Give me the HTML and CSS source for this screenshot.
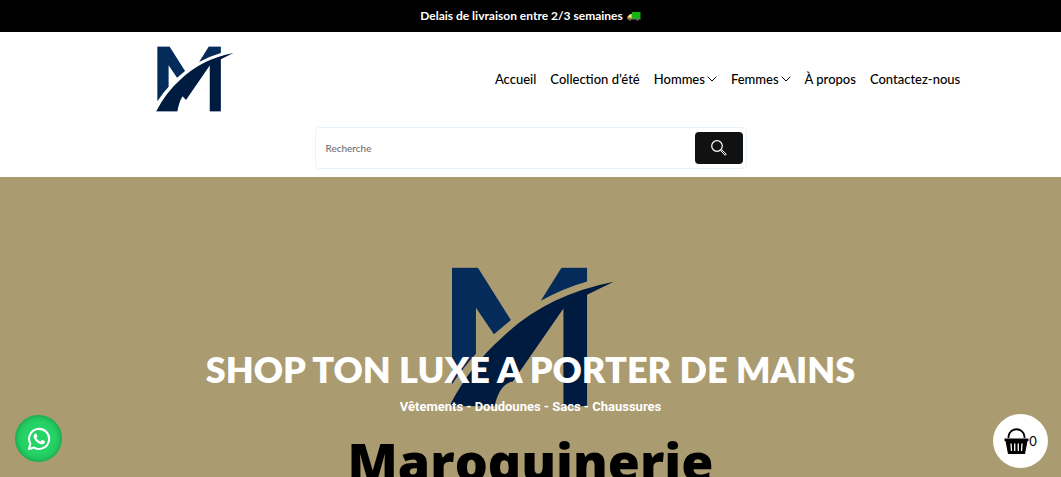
FILE: index.html
```html
<!DOCTYPE html>
<html lang="fr">
<head>
<meta charset="utf-8">
<meta name="viewport" content="width=device-width, initial-scale=1">
<title>Maroquinerie</title>
<link rel="stylesheet" href="styles.css">
</head>
<body>
<svg class="sprite" aria-hidden="true">
  <symbol id="mark" viewBox="50 50 505 420">
    <path class="mark-light" d="M65 52H143L242 209L191 252L137 172V310Q100 350 65 402ZM394 52H471V93Q400 113 332 151Z"/>
    <path class="mark-dark" d="M57 468Q120 345 215 262Q345 135 551 94L471 133V468H400V174L248 394L226 370Q202 410 193 468Z"/>
  </symbol>
  <symbol id="mark-plain" viewBox="50 50 505 420">
    <path class="mark-light" d="M65 52H143L242 209L191 252L137 172V310Q100 350 65 402ZM394 52H471V93Q400 113 332 151Z"/>
    <path class="mark-dark" d="M57 468Q120 345 215 262Q345 135 551 94L471 133V468H400V174L248 394Q208 400 193 468Z"/>
  </symbol>
  <symbol id="chevron" viewBox="0 0 10 6">
    <path d="M.7.7 5 5 9.300.7" fill="none" stroke="currentColor"/>
  </symbol>
</svg>

<div class="announcement">
  <span>Delais de livraison entre 2/3 semaines</span>
  <svg class="truck" viewBox="0 0 14 10" aria-hidden="true">
    <path d="M5 1H13.500V8H5Z" fill="#12b812"/>
    <path d="M5 3H3L.5 5.500V8H5Z" fill="#f5a91c"/>
    <path d="M3 4H4V6H1.500Z" fill="#d9ecf2"/>
    <path d="M.5 8H13.500" stroke="#777"/>
    <circle cx="3" cy="8.500" r="1.300" fill="#666"/><circle cx="10.500" cy="8.500" r="1.300" fill="#666"/>
  </svg>
</div>

<header class="header">
  <div class="header-row">
    <a class="brand" href="#" aria-label="Maroquinerie"><svg viewBox="0 0 505 420"><use href="#mark" width="505" height="420"/></svg></a>
    <nav class="nav">
      <a href="#">Accueil</a>
      <a href="#">Collection d’été</a>
      <a href="#">Hommes <svg class="chevron"><use href="#chevron"/></svg></a>
      <a href="#">Femmes <svg class="chevron"><use href="#chevron"/></svg></a>
      <a href="#">À propos</a>
      <a href="#">Contactez-nous</a>
    </nav>
  </div>
  <form class="search">
    <input type="search" placeholder="Recherche" aria-label="Recherche">
    <button type="button" aria-label="Lancer la recherche">
      <svg viewBox="0 0 16 16" fill="none" stroke="#fff"><circle cx="6" cy="6" r="5.300" stroke-width="1.200"/><path d="m9.800 10.800 1-1 4.500 4.300-1.200 1.200Z"/></svg>
    </button>
  </form>
</header>

<main class="hero">
  <div class="backdrop" aria-hidden="true">
    <svg class="backdrop-mark" viewBox="0 0 505 420"><use href="#mark-plain" width="505" height="420"/></svg>
    <span class="backdrop-name">Maroquinerie</span>
  </div>
  <h1>SHOP TON LUXE A PORTER DE MAINS</h1>
  <p>Vêtements - Doudounes - Sacs - Chaussures</p>
</main>

<a class="whatsapp" href="#" aria-label="WhatsApp">
  <svg viewBox="0 0 24 24">
    <path d="M2 22 3.400 16.800A10 10 0 1 1 7.200 20.600Z" fill="none" stroke="#fff" stroke-width="2.100" stroke-linejoin="round"/>
    <path d="M8 6.700C8.500 6.300 9.100 6.300 9.400 6.900L10.300 9C10.500 9.600 9.700 10.200 9.300 10.700C10.300 12.600 11.700 13.800 13.600 14.600L14.700 13.300C15 13 15.300 13 15.600 13.100L17.600 14.100C18.200 14.400 18.100 15 17.900 15.600C17.300 17 15.500 17.700 14 17.200C10.500 16.200 7.800 13.600 6.700 10.500C6.200 9 6.800 7.500 8 6.700Z" fill="#fff"/>
  </svg>
</a>
<button class="cart" type="button" aria-label="Panier">
  <svg viewBox="0 0 25 26">
    <path d="M4.500 10V8.500C6-1.200 19-1.200 20.500 8.500V10" fill="none" stroke="#000" stroke-width="1.800"/>
    <path d="M.5 10.500H24.500V13H23.500L21 26H4L1.500 13H.5Z"/>
    <path d="M7 15.500 7.500 23M10.700 15.500V23M14.300 15.500V23M18 15.500 17.500 23" stroke="#fff" stroke-width="1.300"/>
  </svg><span>0</span>
</button>
</body>
</html>
```
FILE: styles.css
```css
* { box-sizing: border-box; }
body {
  margin: 0;
  min-height: 100vh;
  display: flex;
  flex-direction: column;
  font-family: Lato, sans-serif;
  color: #000;
  background: #fff;
}
a { color: inherit; text-decoration: none; }
.sprite { position: absolute; width: 0; height: 0; }
.mark-light { fill: #052b5a; }
.mark-dark { fill: #001b40; }

.announcement {
  display: flex;
  justify-content: center;
  align-items: center;
  gap: 4px;
  height: 32px;
  background: #000;
  color: #fff;
  font-size: 12px;
  font-weight: 700;
}
.announcement span { padding-bottom: 2px; }
.truck { width: 14px; height: 10px; }

.header { padding: 14px 0 8px; }
.header-row {
  display: flex;
  align-items: center;
  justify-content: space-between;
  margin-bottom: 15px;
  padding: 0 9.5% 0 14.6%;
}
.brand svg { display: block; width: 79px; height: 66px; }
.nav { display: flex; gap: 14px; font-size: 13px; font-weight: 500; }
.nav a { display: flex; align-items: center; gap: 2px; white-space: nowrap; }
.chevron { width: 10px; height: 6px; }

.search {
  display: flex;
  align-items: center;
  width: 432px;
  max-width: 90%;
  height: 42px;
  margin: 0 auto;
  padding: 4px 3px 4px 4px;
  border: 1px solid #e8f4fd;
  border-radius: 4px;
}
.search input {
  flex: 1;
  min-width: 0;
  border: 0;
  padding: 0 6px;
  font: 10px Lato, sans-serif;
  outline: none;
}
.search input::placeholder { color: #666; }
.search button {
  display: flex;
  align-items: center;
  justify-content: center;
  width: 48px;
  height: 32px;
  padding: 0;
  border: 0;
  border-radius: 4px;
  background: #111;
}
.search button svg { width: 16px; height: 16px; }

.hero {
  position: relative;
  flex: 1;
  min-height: 300px;
  overflow: hidden;
  padding-top: 168px;
  background: #aa9b70;
  color: #fff;
  text-align: center;
}
.backdrop {
  position: absolute;
  inset: 90px 0 auto;
  display: flex;
  flex-direction: column;
  align-items: center;
  color: #000;
}
.backdrop-mark { width: 168px; height: 140px; }
.backdrop-name {
  padding-top: 14px;
  font: 800 52px/80px "Open Sans", sans-serif;
}
.hero h1 {
  position: relative;
  margin: 0;
  font-size: 36px;
  line-height: 48px;
  font-weight: 800;
}
.hero p {
  position: relative;
  margin: 4px 0 0;
  font: 700 13px/20px Roboto, sans-serif;
}

.whatsapp, .cart {
  position: fixed;
  display: flex;
  align-items: center;
  justify-content: center;
  border-radius: 50%;
}
.whatsapp {
  left: 15px;
  bottom: 15px;
  width: 47px;
  height: 47px;
  background: #25d366;
  box-shadow: inset 0 0 7px #168a43;
}
.whatsapp svg { width: 24px; height: 24px; }
.cart {
  right: 13px;
  bottom: 9px;
  width: 55px;
  height: 54px;
  padding: 0;
  border: 0;
  background: #fff;
  color: #000;
  font: 13px Lato, sans-serif;
}
.cart svg { width: 25px; height: 26px; }
```
